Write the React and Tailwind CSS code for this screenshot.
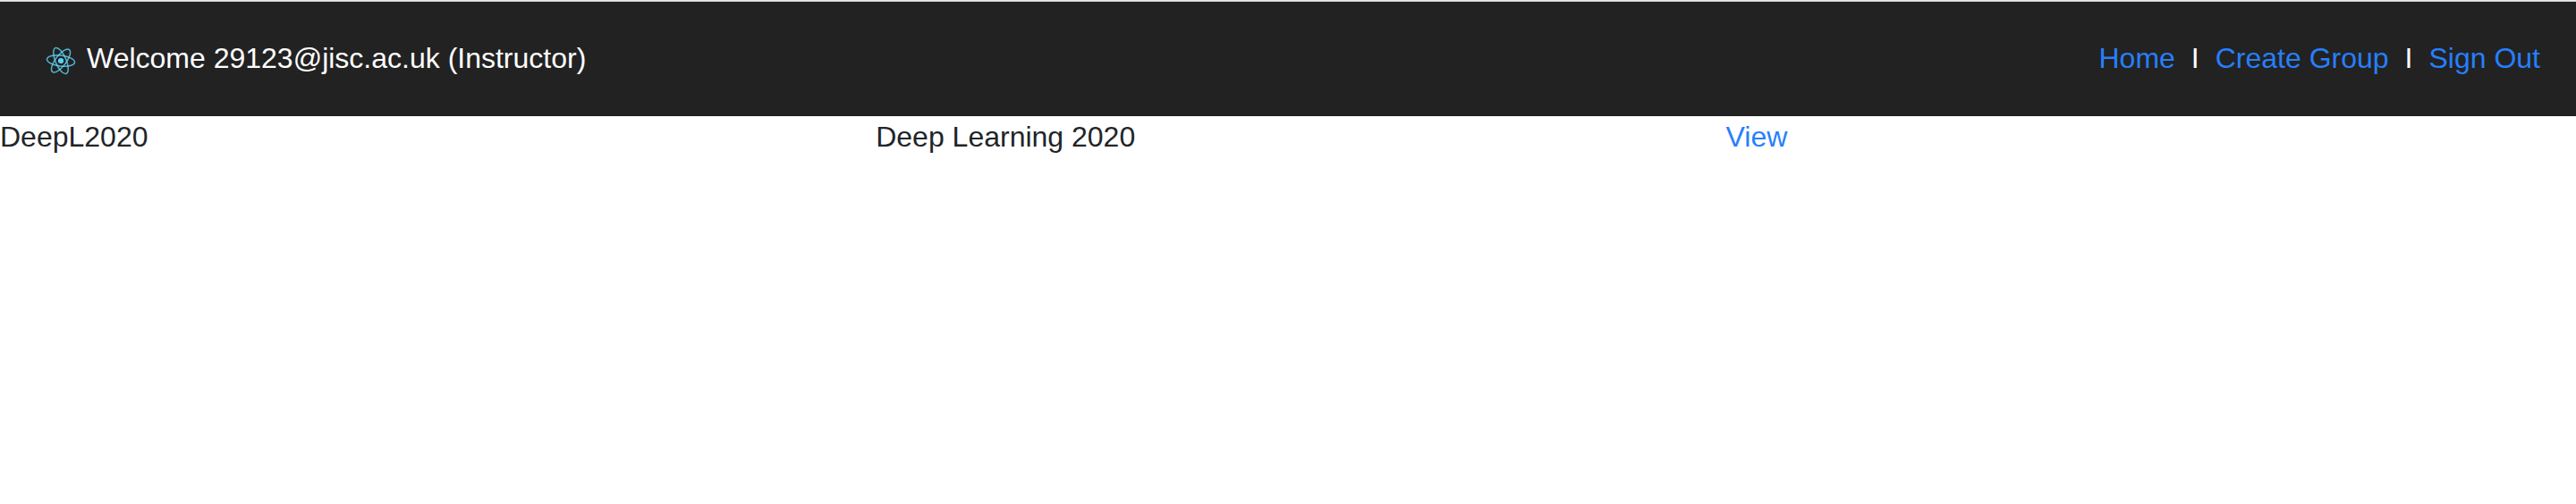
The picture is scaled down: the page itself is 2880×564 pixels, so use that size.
const links = ["Home", "Create Group", "Sign Out"];

const groups = [{ id: "DeepL2020", name: "Deep Learning 2020" }];

function Logo() {
  return (
    <svg viewBox="0 0 34 34" className="mt-1.5 size-[34px] shrink-0" fill="none" aria-hidden="true">
      <g transform="translate(17 17) rotate(7)" stroke="#61dafb" strokeOpacity="0.8" strokeWidth="1.5">
        <ellipse rx="15.6" ry="6" />
        <ellipse rx="15.6" ry="6" transform="rotate(60)" />
        <ellipse rx="15.6" ry="6" transform="rotate(120)" />
        <circle r="3.1" fill="#61dafb" fillOpacity="0.95" stroke="none" />
      </g>
    </svg>
  );
}

export default function App() {
  return (
    <div className="min-h-screen border-t border-[#e6e8e9] bg-white font-['Liberation_Sans',Arial,sans-serif] text-[32px] leading-[46px] text-[#212529]">
      <header className="flex items-center justify-between border-t border-[#cbcfd1] bg-[#222222] pt-10 pr-10 pb-[42px] pl-[51px] text-white">
        <div className="flex items-center gap-3">
          <Logo />
          <span>Welcome 29123@jisc.ac.uk (Instructor)</span>
        </div>
        <nav className="flex items-center gap-[18px]">
          {links.map((label, i) => (
            <div key={label} className="flex items-center gap-[18px]">
              {i > 0 && <span>I</span>}
              <a href="#" className="text-[#267ffc]">
                {label}
              </a>
            </div>
          ))}
        </nav>
      </header>
      <table className="w-full table-fixed text-left">
        <tbody>
          {groups.map((group) => (
            <tr key={group.id}>
              <td className="w-[34%]">{group.id}</td>
              <td className="w-[33%]">{group.name}</td>
              <td>
                <a href="#" className="text-[#267ffc]">
                  View
                </a>
              </td>
            </tr>
          ))}
        </tbody>
      </table>
    </div>
  );
}
